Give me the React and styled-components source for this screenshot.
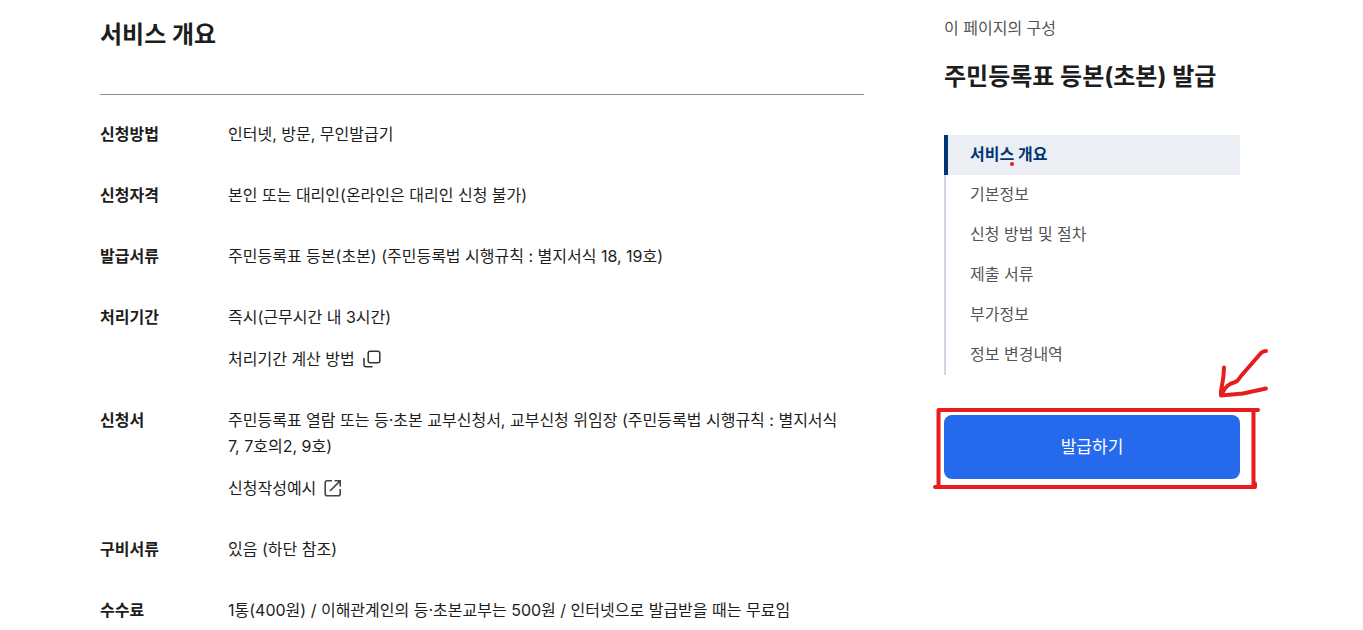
import React from 'react';
import styled, { createGlobalStyle } from 'styled-components';

const GlobalStyle = createGlobalStyle`
  * {
    box-sizing: border-box;
  }
  body {
    margin: 0;
    background: #fff;
    color: #1d1d1d;
    font-family: Inter, 'Noto Sans CJK KR', sans-serif;
    font-size: 16px;
    line-height: 26px;
    word-break: keep-all;
  }
`;

const Page = styled.div`
  display: grid;
  grid-template-columns: minmax(0, 1fr) 296px;
  align-items: start;
  gap: 80px;
  padding: 15px 123px 0 100px;
`;

const SectionTitle = styled.h2`
  margin: 0;
  padding-bottom: 39px;
  border-bottom: 1px solid #8e8e8e;
  font-size: 24px;
  font-weight: 700;
  line-height: 40px;
`;

const InfoList = styled.dl`
  display: flex;
  flex-direction: column;
  gap: 35px;
  margin: 0;
  padding: 26px 0 8px;
`;

const InfoRow = styled.div`
  display: grid;
  grid-template-columns: 128px minmax(0, 1fr);
`;

const InfoLabel = styled.dt`
  font-weight: 700;
`;

const InfoValue = styled.dd`
  display: flex;
  flex-direction: column;
  align-items: flex-start;
  gap: 16px;
  margin: 0;
  padding-right: 16px;
`;

const TextLink = styled.a`
  display: inline-flex;
  align-items: center;
  gap: 7px;
  color: inherit;
  text-decoration: none;
`;

const Aside = styled.aside`
  display: flex;
  flex-direction: column;
`;

const AsideCaption = styled.p`
  margin: 0;
  color: #555;
`;

const AsideTitle = styled.h1`
  margin: 18px 0 40px;
  font-size: 24px;
  font-weight: 700;
  line-height: 36px;
`;

const Nav = styled.nav`
  display: flex;
  flex-direction: column;
  margin-bottom: 40px;
`;

const NavLink = styled.a`
  position: relative;
  display: flex;
  align-items: center;
  height: 40px;
  padding: 0 0 2px ${({ $active }) => ($active ? '22px' : '24px')};
  border-left: ${({ $active }) => ($active ? '4px solid #003675' : '2px solid #cdd8e4')};
  background: ${({ $active }) => ($active ? '#ebeff4' : 'transparent')};
  color: ${({ $active }) => ($active ? '#003675' : '#555')};
  font-weight: ${({ $active }) => ($active ? 700 : 400)};
  text-decoration: none;
`;

const RedDot = styled.span`
  position: absolute;
  top: 27px;
  left: 62px;
  width: 4px;
  height: 4px;
  border-radius: 50%;
  background: #e81c1c;
`;

const ButtonArea = styled.div`
  position: relative;
`;

const IssueButton = styled.button`
  width: 100%;
  height: 64px;
  padding: 0 0 4px;
  border: 0;
  border-radius: 8px;
  background: #256aec;
  color: #fff;
  font-family: inherit;
  font-size: 17px;
  cursor: pointer;
`;

const Marker = styled.svg`
  position: absolute;
  top: -75px;
  left: -14px;
  pointer-events: none;
`;

function PopupIcon() {
  return (
    <svg width="20" height="20" viewBox="0 0 20 20" fill="none" stroke="#333" strokeWidth="1.5" strokeLinecap="round" aria-hidden="true">
      <rect x="6.2" y="2.2" width="11.6" height="11.6" rx="2" />
      <path d="M2 9.5v6.3a2 2 0 0 0 2 2h6" />
    </svg>
  );
}

function NewWindowIcon() {
  return (
    <svg width="20" height="20" viewBox="0 0 20 20" fill="none" stroke="#444" strokeWidth="1.6" aria-hidden="true">
      <path d="M9 2.8H4.2a2 2 0 0 0-2 2v11a2 2 0 0 0 2 2h11a2 2 0 0 0 2-2V11" />
      <path d="M7 13 16.6 3.4M11.5 2.8h5.7v5.7" />
    </svg>
  );
}

const rows = [
  { label: '신청방법', text: '인터넷, 방문, 무인발급기' },
  { label: '신청자격', text: '본인 또는 대리인(온라인은 대리인 신청 불가)' },
  { label: '발급서류', text: '주민등록표 등본(초본) (주민등록법 시행규칙 : 별지서식 18, 19호)' },
  { label: '처리기간', text: '즉시(근무시간 내 3시간)', link: '처리기간 계산 방법', icon: <PopupIcon /> },
  {
    label: '신청서',
    text: '주민등록표 열람 또는 등·초본 교부신청서, 교부신청 위임장 (주민등록법 시행규칙 : 별지서식 7, 7호의2, 9호)',
    link: '신청작성예시',
    icon: <NewWindowIcon />,
  },
  { label: '구비서류', text: '있음 (하단 참조)' },
  { label: '수수료', text: '1통(400원) / 이해관계인의 등·초본교부는 500원 / 인터넷으로 발급받을 때는 무료임' },
];

const navItems = ['서비스 개요', '기본정보', '신청 방법 및 절차', '제출 서류', '부가정보', '정보 변경내역'];

function App() {
  return (
    <>
      <GlobalStyle />
      <Page>
        <main>
          <SectionTitle>서비스 개요</SectionTitle>
          <InfoList>
            {rows.map((row) => (
              <InfoRow key={row.label}>
                <InfoLabel>{row.label}</InfoLabel>
                <InfoValue>
                  <span>{row.text}</span>
                  {row.link && (
                    <TextLink href="#">
                      {row.link}
                      {row.icon}
                    </TextLink>
                  )}
                </InfoValue>
              </InfoRow>
            ))}
          </InfoList>
        </main>

        <Aside>
          <AsideCaption>이 페이지의 구성</AsideCaption>
          <AsideTitle>주민등록표 등본(초본) 발급</AsideTitle>
          <Nav>
            {navItems.map((item, i) => (
              <NavLink key={item} href="#" $active={i === 0}>
                {item}
                {i === 0 && <RedDot />}
              </NavLink>
            ))}
          </Nav>
          <ButtonArea>
            <IssueButton type="button">발급하기</IssueButton>
            {/* hand-drawn frame and arrow */}
            <Marker width="350" height="160" viewBox="0 0 350 160" fill="none" stroke="#e81c1c" strokeWidth="4" strokeLinecap="round" strokeLinejoin="round" aria-hidden="true">
              <path d="M8.500 70H328M8.500 71V146M5 147H325M323.500 71V146M325 143.500V147" />
              <path d="M336 11q-3 0-5 2L311 36q-2 3-4 5-3 2-6 2.500-4 2-6 5l-3 5" />
              <path d="M294 27.500 293.500 36 291 51.500V55.500L313 53.500 336 48.500" />
            </Marker>
          </ButtonArea>
        </Aside>
      </Page>
    </>
  );
}

export default App;
